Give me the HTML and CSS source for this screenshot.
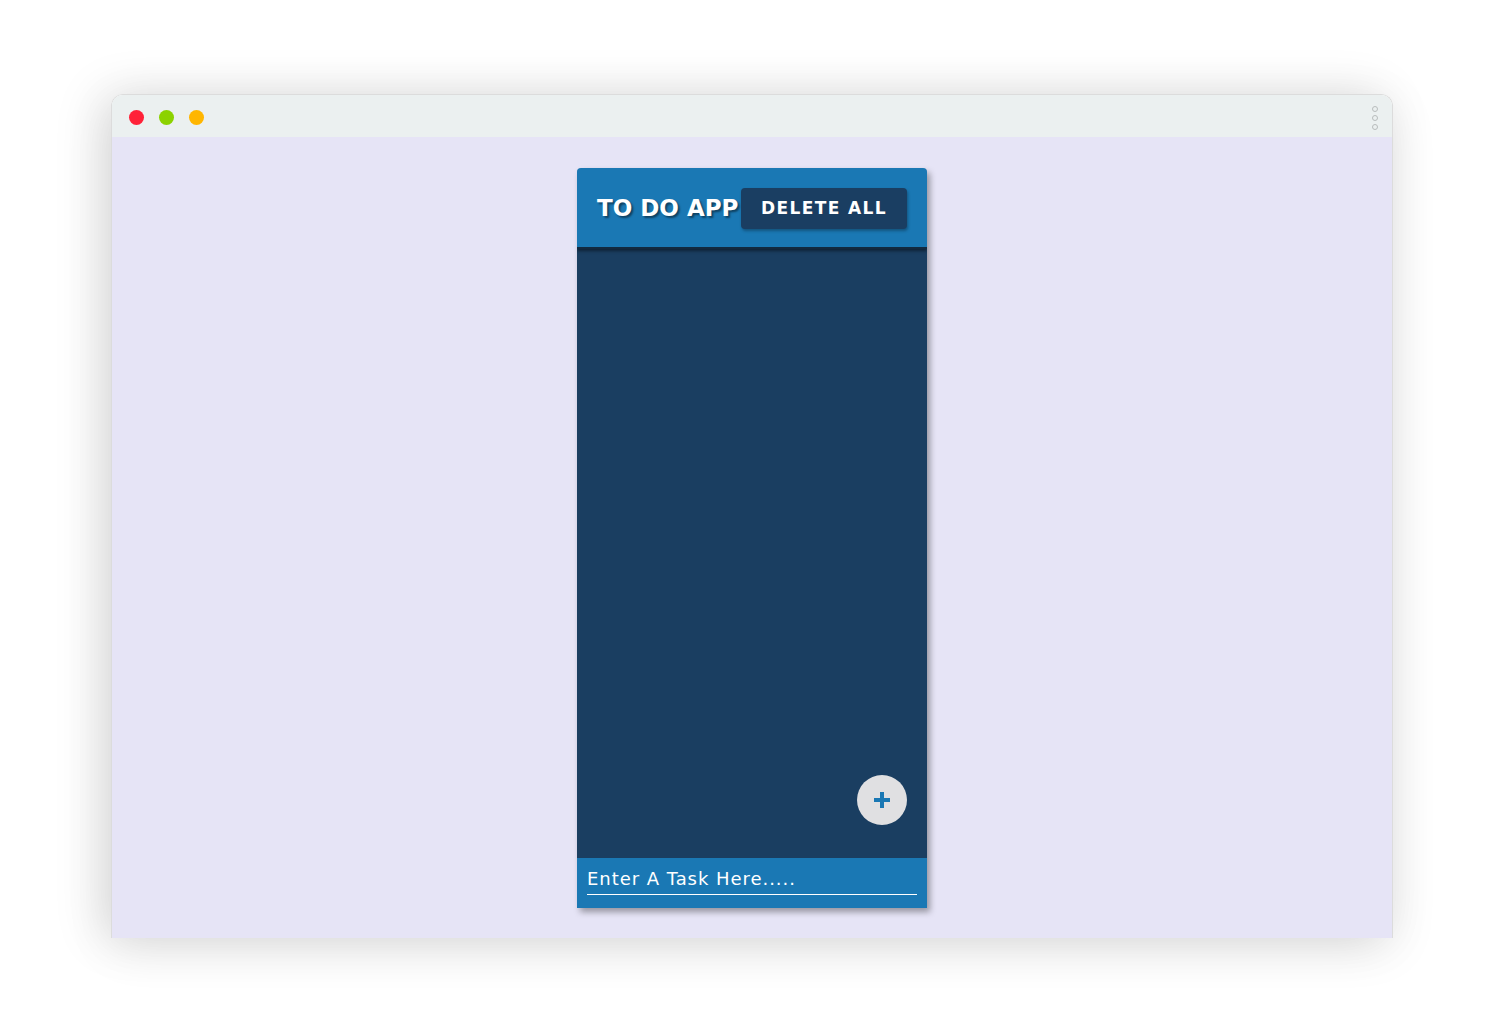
FILE: index.html
```html
<!DOCTYPE html>
<html>
<head>
<meta charset="utf-8">
<link rel="stylesheet" href="styles.css">
</head>
<body>
<div class="window">
  <div class="titlebar">
    <div class="dots">
      <span class="dot red"></span>
      <span class="dot green"></span>
      <span class="dot yellow"></span>
    </div>
    <div class="menu">
      <span></span><span></span><span></span>
    </div>
  </div>
  <div class="content">
    <div class="app">
      <header class="app-header">
        <h1 class="title">TO DO APP</h1>
        <button class="delete-btn">DELETE ALL</button>
      </header>
      <main class="app-body">
        <button class="add-btn" aria-label="Add">
          <svg width="20" height="20" viewBox="0 0 20 20"><path d="M10 2v16M2 10h16" stroke="#1a78b4" stroke-width="4" fill="none"/></svg>
        </button>
      </main>
      <footer class="app-footer">
        <input class="task-input" type="text" placeholder="Enter A Task Here.....">
      </footer>
    </div>
  </div>
</div>
</body>
</html>
```

FILE: styles.css
```css
html, body {
  margin: 0;
  padding: 0;
  background: #ffffff;
}
body {
  width: 1504px;
  height: 1018px;
  overflow: hidden;
  padding-top: 94px;
  padding-left: 111px;
  box-sizing: border-box;
}
.window {
  width: 1282px;
  height: 844px;
  border-radius: 12px 12px 0 0;
  overflow: hidden;
  border: 1px solid #dcdcdc;
  border-bottom: none;
  box-sizing: border-box;
  box-shadow: -10px 0 50px rgba(0,0,0,0.12), 0 10px 50px rgba(0,0,0,0.08);
  display: flex;
  flex-direction: column;
}
.titlebar {
  height: 42px;
  flex: none;
  background: #ebf0f0;
  display: flex;
  align-items: center;
  justify-content: space-between;
  padding: 3px 14px 0 17px;
  box-sizing: border-box;
}
.dots {
  display: flex;
  gap: 15px;
}
.dot {
  width: 15px;
  height: 15px;
  border-radius: 50%;
  display: block;
}
.red { background: #ff2138; }
.green { background: #8cd200; }
.yellow { background: #ffb600; }
.menu {
  display: flex;
  flex-direction: column;
  gap: 3px;
}
.menu span {
  width: 4px;
  height: 4px;
  border: 1px solid #b8bcbc;
  border-radius: 50%;
  display: block;
}
.content {
  flex: 1;
  background: #e6e4f6;
  display: flex;
  justify-content: center;
  padding-top: 31px;
}
.app {
  width: 350px;
  height: 740px;
  display: flex;
  flex-direction: column;
  border-radius: 4px 4px 0 0;
  overflow: hidden;
  box-shadow: 3px 4px 6px rgba(0,0,0,0.35);
  align-self: flex-start;
}
.app-header {
  height: 81px;
  flex: none;
  background: #1a78b4;
  display: flex;
  align-items: center;
  justify-content: space-between;
  padding: 0 20px;
  box-sizing: border-box;
  border-bottom: 2px solid #122a40;
  position: relative;
  z-index: 1;
  box-shadow: 0 2px 3px rgba(0,0,0,0.45);
}
.title {
  margin: 0;
  font-family: "DejaVu Sans", sans-serif;
  font-weight: bold;
  font-size: 23px;
  color: #ffffff;
  text-shadow: 2px 2px 2px rgba(0,0,0,0.45);
  white-space: nowrap;
}
.delete-btn {
  width: 166px;
  height: 41px;
  border: none;
  border-radius: 4px;
  background: #1a3e62;
  color: #ffffff;
  font-family: "DejaVu Sans", sans-serif;
  font-weight: bold;
  font-size: 17px;
  letter-spacing: 1.4px;
  box-shadow: 1px 2px 3px rgba(0,0,0,0.3);
  padding: 0;
  margin-top: 1px;
}
.app-body {
  flex: 1;
  background: #1a3e61;
  display: flex;
  align-items: flex-end;
  justify-content: flex-end;
  padding: 0 20px 33px 0;
}
.add-btn {
  width: 50px;
  height: 50px;
  border-radius: 50%;
  border: none;
  background: #e0e0e2;
  display: flex;
  align-items: center;
  justify-content: center;
  padding: 0;
}
.app-footer {
  height: 50px;
  flex: none;
  background: #1a78b4;
  padding: 8px 10px 0;
  box-sizing: border-box;
}
.task-input {
  width: 100%;
  box-sizing: border-box;
  background: transparent;
  border: none;
  border-bottom: 1px solid #ffffff;
  outline: none;
  color: #ffffff;
  font-family: "DejaVu Sans", sans-serif;
  font-size: 18px;
  letter-spacing: 0.95px;
  padding: 0 0 4px 0;
  height: 29px;
}
.task-input::placeholder {
  color: #ffffff;
  opacity: 1;
}
```
